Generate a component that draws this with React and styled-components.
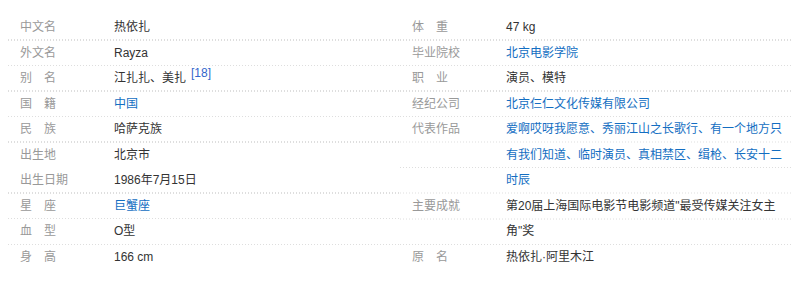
import React from "react";
import styled, { createGlobalStyle } from "styled-components";

const leftItems = [
  { name: "中文名", value: "热依扎" },
  { name: "外文名", value: "Rayza" },
  { name: "别名", spread: true, value: "江扎扎、美扎", sup: "[18]" },
  { name: "国籍", spread: true, value: "中国", link: true },
  { name: "民族", spread: true, value: "哈萨克族" },
  { name: "出生地", value: "北京市" },
  { name: "出生日期", value: "1986年7月15日" },
  { name: "星座", spread: true, value: "巨蟹座", link: true },
  { name: "血型", spread: true, value: "O型" },
  { name: "身高", spread: true, value: "166 cm" },
];

const rightItems = [
  { name: "体重", spread: true, value: "47 kg" },
  { name: "毕业院校", value: "北京电影学院", link: true },
  { name: "职业", spread: true, value: "演员、模特" },
  { name: "经纪公司", value: "北京仨仁文化传媒有限公司", link: true },
  {
    name: "代表作品",
    value: "爱啊哎呀我愿意、秀丽江山之长歌行、有一个地方只有我们知道、临时演员、真相禁区、缉枪、长安十二时辰",
    link: true,
  },
  { name: "主要成就", value: "第20届上海国际电影节电影频道\"最受传媒关注女主角\"奖" },
  { name: "原名", spread: true, value: "热依扎·阿里木江" },
];

const GlobalStyle = createGlobalStyle`
  body {
    margin: 0;
    background: #fff;
    font-family: "Liberation Sans", "Noto Sans CJK SC", sans-serif;
    font-size: 12px;
    color: #333;
  }
`;

const Card = styled.div`
  display: grid;
  grid-template-columns: 392px 392px;
  padding: 15px 8px 0;
`;

const Column = styled.dl`
  margin: 0;
`;

const Row = styled.div`
  display: grid;
  grid-template-columns: 94px 1fr;
  padding-left: 12px;
  line-height: 25.5px;
  background-image: ${(p) =>
    p.$last
      ? "none"
      : "linear-gradient(#fff 0 24.5px, transparent 24.5px), linear-gradient(to right, #dedede 1px, transparent 1px)"};
  background-size: 100% 25.5px, 3px 100%;
`;

const Name = styled.dt`
  color: #999;
  letter-spacing: ${(p) => (p.$spread ? "12px" : "0")};
  white-space: nowrap;
`;

const Value = styled.dd`
  margin: 0;
  width: 280px;
  color: ${(p) => (p.$link ? "#136ec2" : "#333")};
`;

const Sup = styled.sup`
  position: relative;
  top: -5px;
  vertical-align: baseline;
  margin-left: 5px;
  font-size: 12px;
  color: #3366cc;
`;

const InfoColumn = ({ items }) => (
  <Column>
    {items.map((item, i) => (
      <Row key={item.name} $last={i === items.length - 1}>
        <Name $spread={item.spread}>{item.name}</Name>
        <Value $link={item.link}>
          {item.value}
          {item.sup && <Sup>{item.sup}</Sup>}
        </Value>
      </Row>
    ))}
  </Column>
);

export default function App() {
  return (
    <>
      <GlobalStyle />
      <Card>
        <InfoColumn items={leftItems} />
        <InfoColumn items={rightItems} />
      </Card>
    </>
  );
}
